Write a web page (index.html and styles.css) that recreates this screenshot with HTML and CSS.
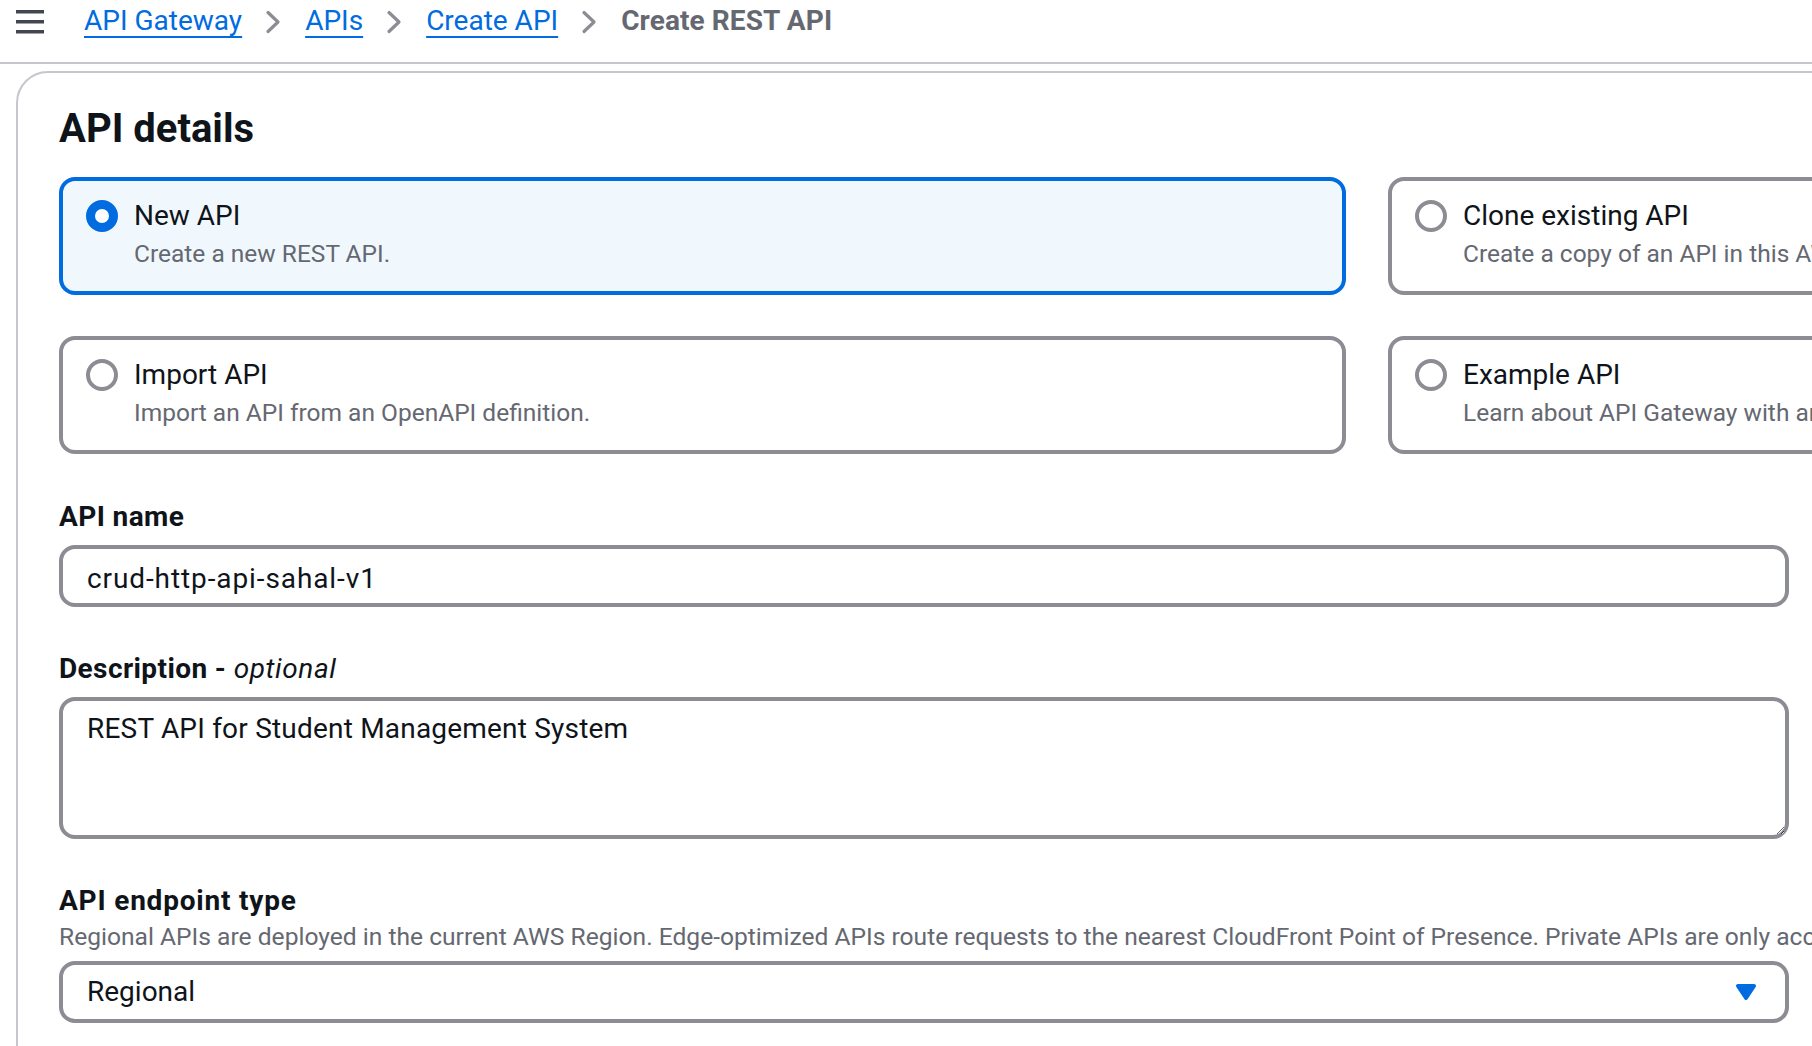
FILE: index.html
```html
<!DOCTYPE html>
<html lang="en">
<head>
<meta charset="utf-8">
<title>Create REST API</title>
<link rel="stylesheet" href="styles.css">
</head>
<body>
<header class="topbar">
  <button class="menu-btn" type="button" aria-label="Open navigation">
    <svg width="28" height="24" viewBox="0 0 28 24" aria-hidden="true">
      <rect x="0" y="0" width="28" height="3.5"></rect>
      <rect x="0" y="10" width="28" height="3.5"></rect>
      <rect x="0" y="20" width="28" height="3.5"></rect>
    </svg>
  </button>
  <nav class="crumbs" aria-label="Breadcrumbs">
    <a class="crumb-link" href="#">API Gateway</a>
    <svg class="crumb-sep" width="18" height="24" viewBox="0 0 18 24" aria-hidden="true"><polyline points="3,2.5 13,12 3,21.5"></polyline></svg>
    <a class="crumb-link" href="#">APIs</a>
    <svg class="crumb-sep" width="18" height="24" viewBox="0 0 18 24" aria-hidden="true"><polyline points="3,2.5 13,12 3,21.5"></polyline></svg>
    <a class="crumb-link" href="#">Create API</a>
    <svg class="crumb-sep" width="18" height="24" viewBox="0 0 18 24" aria-hidden="true"><polyline points="3,2.5 13,12 3,21.5"></polyline></svg>
    <span class="crumb-current">Create REST API</span>
  </nav>
</header>

<main class="card">
  <h2 class="card-title">API details</h2>

  <div class="tiles">
    <div class="tile tile-selected">
      <span class="radio radio-checked"></span>
      <span class="tile-text">
        <span class="tile-label">New API</span>
        <span class="tile-desc">Create a new REST API.</span>
      </span>
    </div>
    <div class="tile">
      <span class="radio"></span>
      <span class="tile-text">
        <span class="tile-label">Clone existing API</span>
        <span class="tile-desc">Create a copy of an API in this AWS Region.</span>
      </span>
    </div>
    <div class="tile">
      <span class="radio"></span>
      <span class="tile-text">
        <span class="tile-label">Import API</span>
        <span class="tile-desc">Import an API from an OpenAPI definition.</span>
      </span>
    </div>
    <div class="tile">
      <span class="radio"></span>
      <span class="tile-text">
        <span class="tile-label">Example API</span>
        <span class="tile-desc">Learn about API Gateway with an example API.</span>
      </span>
    </div>
  </div>

  <div class="fields">
    <div class="field">
      <label class="field-label" for="api-name">API name</label>
      <input class="control control-name" id="api-name" type="text" value="crud-http-api-sahal-v1">
    </div>
    <div class="field">
      <label class="field-label" for="api-desc">Description - <i class="optional">optional</i></label>
      <textarea class="control control-area" id="api-desc">REST API for Student Management System</textarea>
    </div>
    <div class="field">
      <span class="field-label field-label-wide">API endpoint type</span>
      <p class="field-desc">Regional APIs are deployed in the current AWS Region. Edge-optimized APIs route requests to the nearest CloudFront Point of Presence. Private APIs are only accessible from VPCs.</p>
      <button class="control control-select" type="button">
        <span>Regional</span>
        <svg class="caret" width="32" height="32" viewBox="0 0 16 16" aria-hidden="true"><path d="M4 5h8l-4 6-4-6z"></path></svg>
      </button>
    </div>
  </div>
</main>
</body>
</html>
```

FILE: styles.css
```css
* {
  box-sizing: border-box;
}

html,
body {
  margin: 0;
  padding: 0;
}

body {
  width: 1812px;
  height: 1046px;
  overflow: hidden;
  background: #ffffff;
  color: #0f141a;
  font-family: Roboto, "Liberation Sans", Arial, sans-serif;
}

/* ---------- top bar ---------- */
.topbar {
  height: 64px;
  border-bottom: 2px solid #c6c6cd;
  display: flex;
  align-items: flex-start;
  padding-left: 16px;
}

.menu-btn {
  margin: 10px 0 0 0;
  padding: 0;
  border: 0;
  background: none;
  display: flex;
  fill: #424650;
}

.crumbs {
  display: flex;
  align-items: center;
  margin-left: 40px;
  padding-top: 5px;
  font-size: 28px;
  line-height: 32px;
}

.crumb-link {
  color: #006ce0;
  text-decoration: underline;
  text-decoration-thickness: 2px;
  text-underline-offset: 6px;
}

.crumb-sep {
  margin: 2px 22px 0 23px;
  fill: none;
  stroke: #8c8c94;
  stroke-width: 3.2;
  stroke-linecap: round;
  stroke-linejoin: round;
}

.crumb-current {
  color: #656871;
  font-weight: 700;
  letter-spacing: 0.1px;
}

/* ---------- card ---------- */
.card {
  display: block;
  margin: 7px 0 0 16px;
  width: 2720px;
  min-height: 1200px;
  border: 2px solid #c6c6cd;
  border-radius: 32px;
  padding: 32px 41px;
}

.card-title {
  margin: 0;
  font-size: 40px;
  line-height: 48px;
  font-weight: 700;
  color: #0f141a;
}

/* ---------- tiles ---------- */
.tiles {
  display: grid;
  grid-template-columns: 1287px 1287px;
  column-gap: 42px;
  row-gap: 41px;
  margin-top: 24px;
}

.tile {
  display: flex;
  align-items: flex-start;
  gap: 16px;
  border: 4px solid #8c8c94;
  border-radius: 16px;
  padding: 19px 23px 21px;
  background: #ffffff;
}

.tile-selected {
  border-color: #006ce0;
  background: #f1f8fd;
}

.radio {
  flex: none;
  width: 32px;
  height: 32px;
  border-radius: 50%;
  border: 4px solid #8c8c94;
  background: #ffffff;
}

.radio-checked {
  border: 9.5px solid #006ce0;
}

.tile-text {
  display: flex;
  flex-direction: column;
}

.tile-label {
  font-size: 28px;
  line-height: 32px;
  color: #0f141a;
}

.tile-desc {
  margin-top: 6px;
  font-size: 24.5px;
  line-height: 32px;
  color: #656871;
  white-space: nowrap;
}

/* ---------- fields ---------- */
.fields {
  margin-top: 47px;
  display: flex;
  flex-direction: column;
  gap: 46px;
}

.field {
  display: flex;
  flex-direction: column;
  align-items: flex-start;
}

.field-label {
  font-size: 28px;
  line-height: 32px;
  font-weight: 700;
  color: #0f141a;
  letter-spacing: 0.4px;
}

.field-label-wide {
  letter-spacing: 0.8px;
}

.optional {
  font-weight: 400;
  font-style: italic;
  letter-spacing: 0.6px;
}

.field-desc {
  margin: 4px 0 0 0;
  font-size: 24.6px;
  line-height: 32px;
  color: #656871;
  white-space: nowrap;
}

.control {
  display: block;
  width: 1730px;
  height: 62px;
  margin: 12px 0 0 0;
  border: 4px solid #8c8c94;
  border-radius: 16px;
  padding: 12px 24px 8px;
  background: #ffffff;
  color: #0f141a;
  font-family: Roboto, "Liberation Sans", Arial, sans-serif;
  font-size: 28px;
  line-height: 34px;
  outline: none;
}

.control-name {
  letter-spacing: 0.9px;
}

.control-area {
  height: 142px;
  padding: 11px 24px;
  resize: both;
  letter-spacing: 0.2px;
}

.control-select {
  margin-top: 8px;
  padding: 0 23px 0 24px;
  display: flex;
  align-items: center;
  justify-content: space-between;
  text-align: left;
  cursor: pointer;
}

.caret {
  fill: #006ce0;
  stroke: #006ce0;
  stroke-width: 2;
  stroke-linejoin: round;
}
```
